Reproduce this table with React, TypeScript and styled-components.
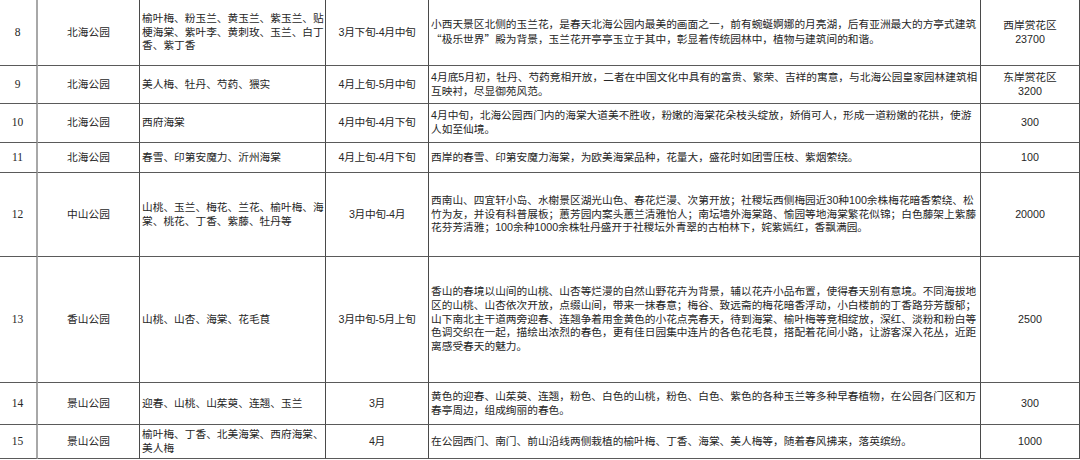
import React from "react";
import styled, { createGlobalStyle } from "styled-components";

const GlobalStyle = createGlobalStyle`
  html, body {
    margin: 0;
    padding: 0;
    background: #ffffff;
  }
  body {
    width: 1080px;
    height: 460px;
    overflow: hidden;
    font-family: "Liberation Sans", "Noto Sans CJK SC", sans-serif;
    color: #262626;
  }
`;

const Sheet = styled.div`
  width: 1080px;
  display: flex;
  flex-direction: column;
`;

const Row = styled.div<{ $h: number }>`
  display: grid;
  grid-template-columns: 38px 102px 186px 103px 552px 99px;
  height: ${({ $h }) => $h}px;
`;

const Cell = styled.div<{ $align?: "left" | "center" }>`
  box-sizing: border-box;
  border-right: 1px solid #4a4a4a;
  border-bottom: 1px solid #5a5a5a;
  display: flex;
  flex-direction: column;
  justify-content: center;
  align-items: ${({ $align }) => ($align === "left" ? "flex-start" : "center")};
  text-align: ${({ $align }) => $align || "center"};
  padding: ${({ $align }) => ($align === "left" ? "0 0 0 2px" : "0")};
  font-size: 10.7px;
  line-height: 13.7px;
  overflow: hidden;
`;

const IndexCell = styled(Cell)`
  border-right: 2px solid #a8a8a8;
  font-family: "Liberation Serif", "Noto Sans CJK SC", serif;
  font-size: 11.5px;
  padding-right: 1px;
`;

const PeriodCell = styled(Cell)`
  letter-spacing: -0.3px;
`;

const Line = styled.span`
  display: block;
  white-space: nowrap;
`;

const Wide = styled.span`
  display: inline-block;
  width: 10.7px;
  text-align: ${({ $side }: { $side: "open" | "close" }) => ($side === "open" ? "right" : "left")};
  font-family: "Noto Sans CJK SC", sans-serif;
`;

interface Entry {
  no: number;
  park: string;
  flowers: string[];
  period: string;
  desc: React.ReactNode[];
  area: string[];
  h: number;
}

const rows: Entry[] = [
  {
    no: 8,
    park: "北海公园",
    flowers: ["榆叶梅、粉玉兰、黄玉兰、紫玉兰、贴", "梗海棠、紫叶李、黄刺玫、玉兰、白丁", "香、紫丁香"],
    period: "3月下旬-4月中旬",
    desc: [
      "小西天景区北侧的玉兰花，是春天北海公园内最美的画面之一，前有蜿蜒婀娜的月亮湖，后有亚洲最大的方亭式建筑",
      <>
        <Wide $side="open">“</Wide>极乐世界<Wide $side="close">”</Wide>殿为背景，玉兰花开亭亭玉立于其中，彰显着传统园林中，植物与建筑间的和谐。
      </>,
    ],
    area: ["西岸赏花区", "23700"],
    h: 66,
  },
  {
    no: 9,
    park: "北海公园",
    flowers: ["美人梅、牡丹、芍药、猥实"],
    period: "4月上旬-5月中旬",
    desc: [
      "4月底5月初，牡丹、芍药竞相开放，二者在中国文化中具有的富贵、繁荣、吉祥的寓意，与北海公园皇家园林建筑相",
      "互映衬，尽显御苑风范。",
    ],
    area: ["东岸赏花区", "3200"],
    h: 38,
  },
  {
    no: 10,
    park: "北海公园",
    flowers: ["西府海棠"],
    period: "4月中旬-4月下旬",
    desc: [
      "4月中旬，北海公园西门内的海棠大道美不胜收，粉嫩的海棠花朵枝头绽放，娇俏可人，形成一道粉嫩的花拱，使游",
      "人如至仙境。",
    ],
    area: ["300"],
    h: 39,
  },
  {
    no: 11,
    park: "北海公园",
    flowers: ["春雪、印第安魔力、沂州海棠"],
    period: "4月上旬-4月下旬",
    desc: ["西岸的春雪、印第安魔力海棠，为欧美海棠品种，花量大，盛花时如团雪压枝、紫烟萦绕。"],
    area: ["100"],
    h: 30,
  },
  {
    no: 12,
    park: "中山公园",
    flowers: ["山桃、玉兰、梅花、兰花、榆叶梅、海", "棠、桃花、丁香、紫藤、牡丹等"],
    period: "3月中旬-4月",
    desc: [
      "西南山、四宜轩小岛、水榭景区湖光山色、春花烂漫、次第开放；社稷坛西侧梅园近30种100余株梅花暗香萦绕、松",
      "竹为友，并设有科普展板；蕙芳园内案头蕙兰清雅怡人；南坛墙外海棠路、愉园等地海棠繁花似锦；白色藤架上紫藤",
      "花芬芳清雅；100余种1000余株牡丹盛开于社稷坛外青翠的古柏林下，姹紫嫣红，香飘满园。",
    ],
    area: ["20000"],
    h: 84,
  },
  {
    no: 13,
    park: "香山公园",
    flowers: ["山桃、山杏、海棠、花毛茛"],
    period: "3月中旬-5月上旬",
    desc: [
      "香山的春境以山间的山桃、山杏等烂漫的自然山野花卉为背景，辅以花卉小品布置，使得春天别有意境。不同海拔地",
      "区的山桃、山杏依次开放，点缀山间，带来一抹春意；梅谷、致远斋的梅花暗香浮动，小白楼前的丁香路芬芳馥郁；",
      "山下南北主干道两旁迎春、连翘争着用金黄色的小花点亮春天，待到海棠、榆叶梅等竞相绽放，深红、淡粉和粉白等",
      "色调交织在一起，描绘出浓烈的春色，更有佳日园集中连片的各色花毛茛，搭配着花间小路，让游客深入花丛，近距",
      "离感受春天的魅力。",
    ],
    area: ["2500"],
    h: 126,
  },
  {
    no: 14,
    park: "景山公园",
    flowers: ["迎春、山桃、山茱萸、连翘、玉兰"],
    period: "3月",
    desc: [
      "黄色的迎春、山茱萸、连翘，粉色、白色的山桃，粉色、白色、紫色的各种玉兰等多种早春植物，在公园各门区和万",
      "春亭周边，组成绚丽的春色。",
    ],
    area: ["300"],
    h: 42,
  },
  {
    no: 15,
    park: "景山公园",
    flowers: ["榆叶梅、丁香、北美海棠、西府海棠、", "美人梅"],
    period: "4月",
    desc: ["在公园西门、南门、前山沿线两侧栽植的榆叶梅、丁香、海棠、美人梅等，随着春风拂来，落英缤纷。"],
    area: ["1000"],
    h: 34,
  },
];

const App = () => (
  <>
    <GlobalStyle />
    <Sheet>
      {rows.map((r) => (
        <Row key={r.no} $h={r.h}>
          <IndexCell>{r.no}</IndexCell>
          <Cell>{r.park}</Cell>
          <Cell $align="left">
            {r.flowers.map((t, i) => (
              <Line key={i}>{t}</Line>
            ))}
          </Cell>
          <PeriodCell>{r.period}</PeriodCell>
          <Cell $align="left">
            {r.desc.map((t, i) => (
              <Line key={i}>{t}</Line>
            ))}
          </Cell>
          <Cell>
            {r.area.map((t, i) => (
              <Line key={i}>{t}</Line>
            ))}
          </Cell>
        </Row>
      ))}
    </Sheet>
  </>
);

export default App;
